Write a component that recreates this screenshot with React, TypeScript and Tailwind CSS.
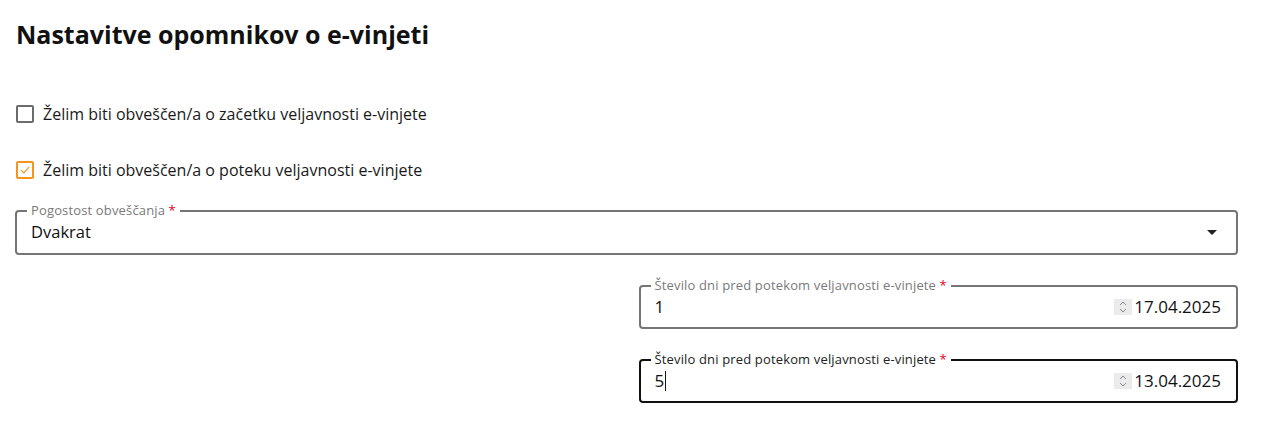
import React, { useState } from 'react';

const font = { fontFamily: '"Open Sans", "Noto Sans", sans-serif' };

const Checkbox: React.FC<{ checked: boolean; label: string; onToggle: () => void }> = ({ checked, label, onToggle }) => (
  <label className="flex items-center gap-[9px] cursor-pointer h-6" onClick={onToggle}>
    <span
      className={`w-[18px] h-[18px] border-2 rounded-[2px] flex items-center justify-center ${
        checked ? 'border-[#f7941d]' : 'border-[#6b6b6b]'
      }`}
    >
      {checked && (
        <svg width="12" height="12" viewBox="0 0 12 12">
          <path d="M2 6.2 L4.8 9 L10 3.2" fill="none" stroke="#f7941d" strokeWidth="1.2" />
        </svg>
      )}
    </span>
    <span className="text-base text-[#1a1a1a]">{label}</span>
  </label>
);

const Spinner = () => (
  <span className="w-[18px] h-4 bg-[#ebebeb] flex items-center justify-center">
    <svg width="10" height="14" viewBox="0 0 10 14">
      <path d="M2 5 L5 2 L8 5 M2 9 L5 12 L8 9" fill="none" stroke="#8a8a8a" strokeWidth="1" />
    </svg>
  </span>
);

const NumberField: React.FC<{ value: string; date: string; focused?: boolean }> = ({ value, date, focused }) => (
  <div
    className={`relative h-[44px] border-2 rounded-[4px] flex items-center pl-[14px] pr-[15px] ${
      focused ? 'border-[#111]' : 'border-[#757575]'
    }`}
  >
    <span
      className={`absolute -top-[11px] left-[10px] px-1 bg-white text-[13px] tracking-[0.15px] ${
        focused ? 'text-[#222]' : 'text-[#7a7a7a]'
      }`}
    >
      Število dni pred potekom veljavnosti e-vinjete <span className="text-[#e0001b]">*</span>
    </span>
    <span className="flex-1 text-[17px] text-[#111] flex items-center">
      {value}
      {focused && <span className="w-px h-5 bg-[#111] ml-px" />}
    </span>
    <Spinner />
    <span className="text-[17px] text-[#111] ml-[2px]">{date}</span>
  </div>
);

export default function App() {
  const [start, setStart] = useState(false);
  const [end, setEnd] = useState(true);

  return (
    <div className="bg-white w-[1263px] h-[433px] pl-[15px] pr-[25px] pt-[18px]" style={font}>
      <h1 className="text-[25px] font-bold text-[#111] leading-8 pl-px">Nastavitve opomnikov o e-vinjeti</h1>

      <div className="mt-[52px] pl-px">
        <Checkbox checked={start} label="Želim biti obveščen/a o začetku veljavnosti e-vinjete" onToggle={() => setStart(!start)} />
      </div>
      <div className="mt-8 pl-px">
        <Checkbox checked={end} label="Želim biti obveščen/a o poteku veljavnosti e-vinjete" onToggle={() => setEnd(!end)} />
      </div>

      <div className="mt-[28px] relative h-[45px] border-2 border-[#757575] rounded-[4px] flex items-center pl-[14px] pr-[19px]">
        <span className="absolute -top-[11px] left-[10px] px-1 bg-white text-[13px] tracking-[0.15px] text-[#7a7a7a]">
          Pogostost obveščanja <span className="text-[#e0001b]">*</span>
        </span>
        <span className="flex-1 text-[16.5px] text-[#111]">Dvakrat</span>
        <svg width="10" height="6" viewBox="0 0 10 6">
          <path d="M0 0 L10 0 L5 5 Z" fill="#222" />
        </svg>
      </div>

      <div className="grid grid-cols-2 gap-6 mt-[30px]">
        <div />
        <div className="flex flex-col gap-[30px]">
          <NumberField value="1" date="17.04.2025" />
          <NumberField value="5" date="13.04.2025" focused />
        </div>
      </div>
    </div>
  );
}
